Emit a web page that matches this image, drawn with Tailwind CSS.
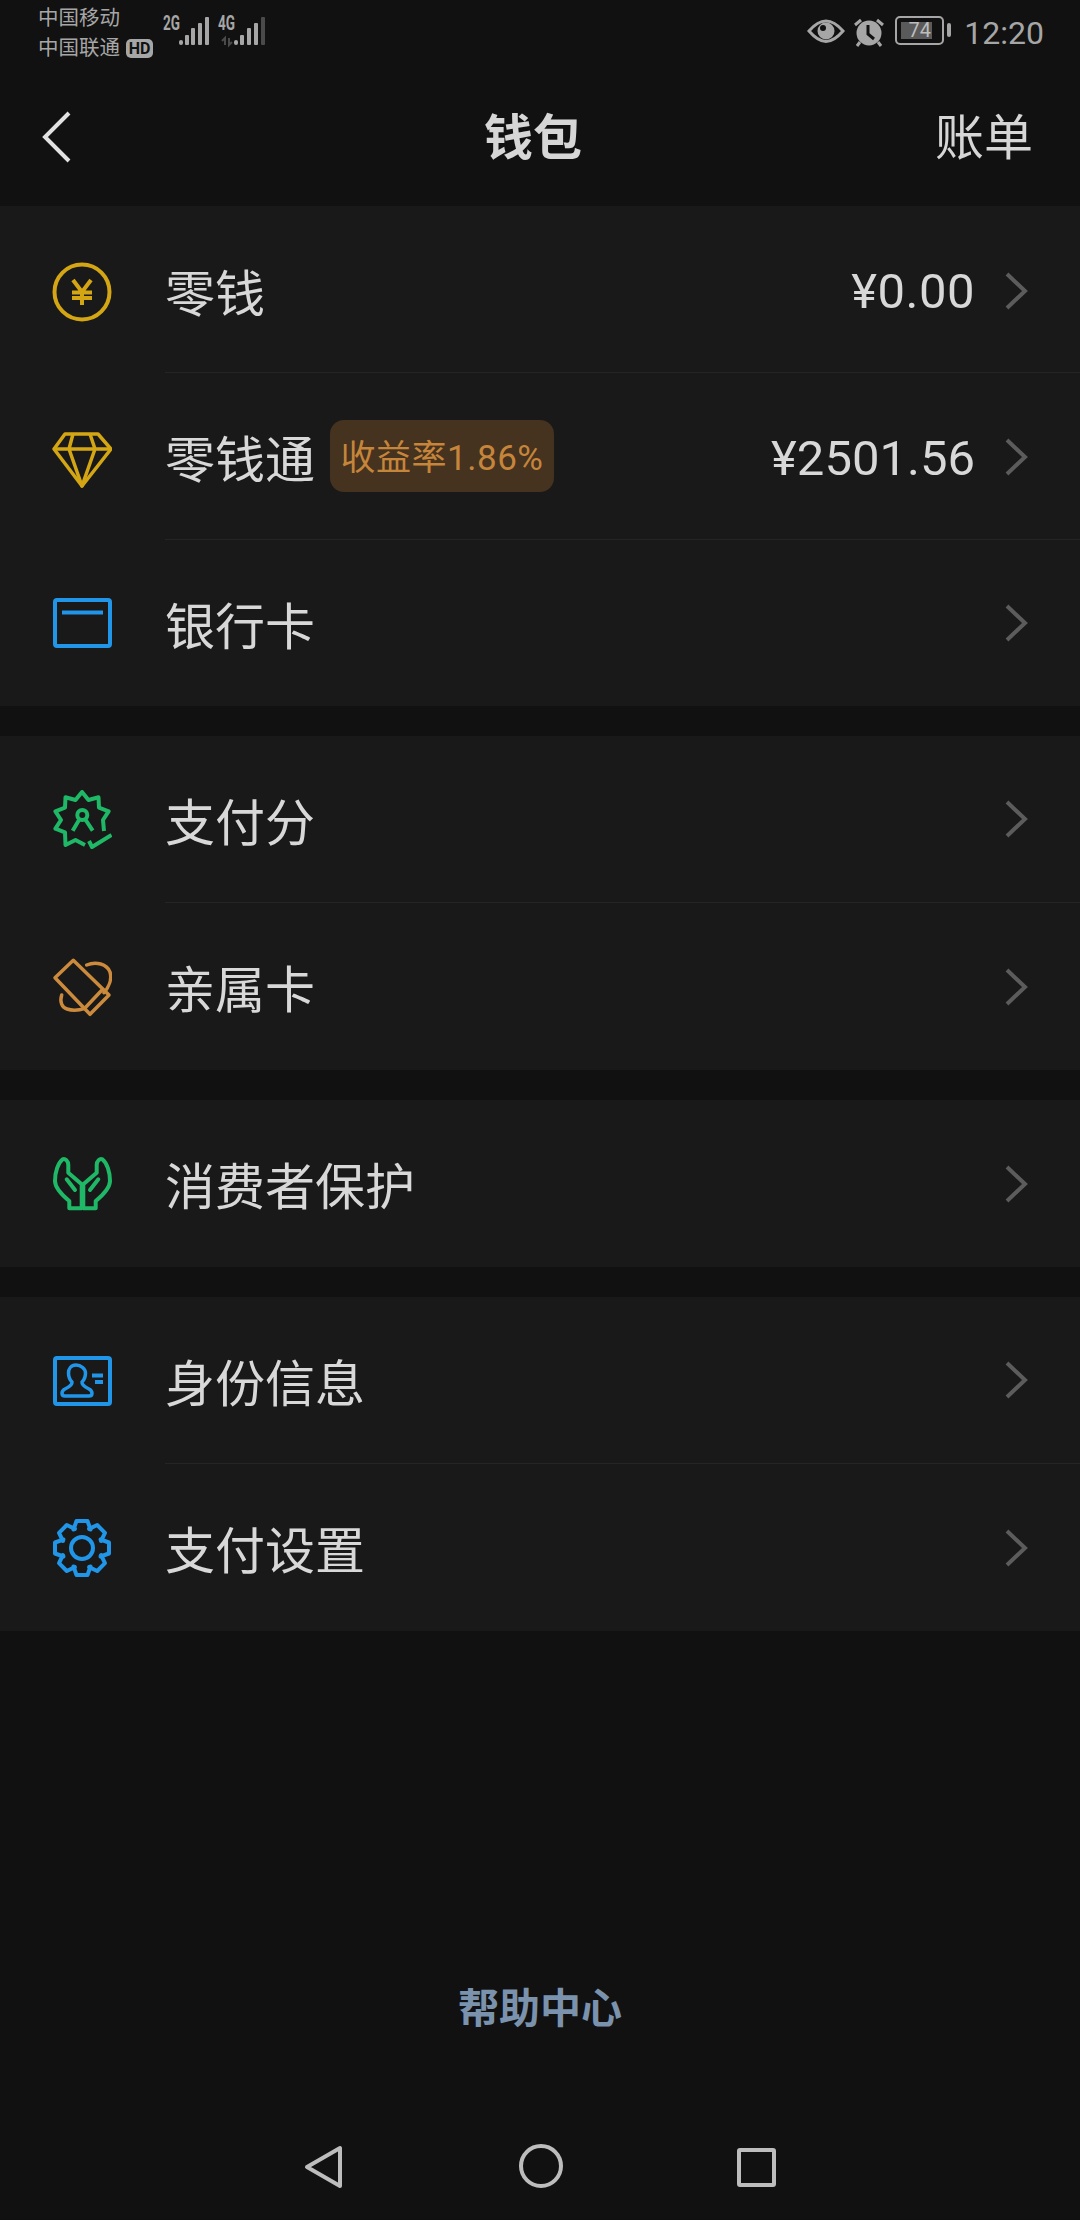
<!DOCTYPE html>
<html lang="en">
<head>
    <meta charset="UTF-8">
    <meta name="viewport" content="width=device-width, initial-scale=1.0">
    <title>钱包</title>
    <script src="https://cdn.jsdelivr.net/npm/@tailwindcss/browser@4"></script>
</head>
<body class="bg-[#111111] font-['Roboto','Noto_Sans_CJK_SC',sans-serif]">
<div class="w-[1080px] h-[2220px] flex flex-col overflow-hidden">

    <!-- Status bar -->
    <div class="h-[64px] flex justify-between text-[#a6a6a6]">
        <div class="flex pl-[38px] pt-[3px]">
            <div class="w-[122px] text-[20.500px] leading-[30px]">
                <div>中国移动</div>
                <div class="flex items-center">中国联通
                    <span class="ml-[6px] w-[27px] h-[19px] rounded-[5px] bg-[#a6a6a6] text-[#111111] text-[16px] leading-[19px] font-bold text-center">HD</span>
                </div>
            </div>
            <svg class="mt-[7px]" width="110" height="40" viewBox="0 0 110 40" fill="#a6a6a6">
                <text x="3" y="20" font-size="20" font-weight="700" textLength="17" lengthAdjust="spacingAndGlyphs">2G</text>
                <text x="58" y="20" font-size="20" font-weight="700" textLength="17" lengthAdjust="spacingAndGlyphs">4G</text>
                <rect x="19" y="30" width="4" height="5" rx="2"/>
                <rect x="25" y="25" width="4" height="10" rx="1"/>
                <rect x="31" y="18" width="4" height="17" rx="1"/>
                <rect x="38" y="13" width="4" height="22" rx="1"/>
                <rect x="45" y="7" width="4" height="28" rx="1"/>
                <rect x="74" y="30" width="4" height="5" rx="2"/>
                <rect x="80" y="25" width="4" height="10" rx="1"/>
                <rect x="87" y="18" width="4" height="17" rx="1"/>
                <rect x="94" y="13" width="4" height="22" rx="1"/>
                <rect x="101" y="7" width="4" height="28" rx="1" fill="#4a4a4a"/>
                <path d="M65 35V28L62 31M69 28V35L72 32" stroke="#4a4a4a" stroke-width="2" fill="none"/>
            </svg>
        </div>
        <div class="flex items-start pt-[16px] pr-[36px]">
            <svg width="38" height="30" viewBox="0 0 38 30" class="mt-[1px]">
                <path d="M2 14C8 7 13 4 19 4S30 7 36 14C30 21 25 24.500 19 24.500S8 21 2 14Z" fill="none" stroke="#a6a6a6" stroke-width="3"/>
                <circle cx="19" cy="14" r="8.500" fill="#a6a6a6"/>
                <circle cx="16" cy="11" r="3" fill="#111111"/>
            </svg>
            <svg width="32" height="30" viewBox="0 0 32 30" class="ml-[8px] mt-[1px]">
                <circle cx="16" cy="16" r="12.500" fill="#a6a6a6"/>
                <path d="M15 8v9l6 5" fill="none" stroke="#111111" stroke-width="3"/>
                <path d="M2 8l6-5M30 8l-6-5M7 25l-3 4M25 25l3 4" stroke="#a6a6a6" stroke-width="3" fill="none"/>
            </svg>
            <div class="ml-[10px] relative w-[49px] h-[29px] border-[2px] border-[#a6a6a6] rounded-[5px] p-[4px]">
                <div class="w-[31px] h-full bg-[#5a5a5a]"></div>
                <span class="absolute inset-0 text-center text-[20px] leading-[25px] text-[#bdbdbd]">74</span>
            </div>
            <div class="ml-[3px] mt-[7px] w-[4px] h-[14px] rounded-[2px] bg-[#a6a6a6]"></div>
            <span class="ml-[13px] text-[32px] leading-[34px]">12:20</span>
        </div>
    </div>

    <!-- Nav bar -->
    <div class="h-[142px] relative flex items-center justify-between pl-[40px] pr-[47px] pt-[8px]">
        <svg class="-translate-y-[2px]" width="32" height="52" viewBox="0 0 32 52" fill="none" stroke="#e2e2e2" stroke-width="4">
            <path d="M29 2L5 26L29 50"/>
        </svg>
        <span class="absolute left-0 right-[14px] text-center text-[49px] leading-[56px] font-semibold text-[#d6d6d6]">钱包</span>
        <span class="text-[49px] leading-[56px] text-[#d6d6d6]">账单</span>
    </div>

    <!-- Balance group -->
    <div class="bg-[#191919] flex flex-col">
        <div class="h-[167px] flex items-center pl-[52px]">
            <svg class="translate-y-[2px]" width="60" height="60" viewBox="0 0 60 60" fill="none" stroke="#d4a614" stroke-width="4">
                <circle cx="30" cy="30" r="27.500"/>
                <path d="M21 18L30 30L39 18M20 30.500H40M20 36H40M30 30V43"/>
            </svg>
            <div class="ml-[53px] flex-1 self-stretch flex items-center border-b border-[#252525] pr-[52px]">
                <span class="pt-[12px] text-[50px] text-[#d8d8d8]">零钱</span>
                <span class="pt-[6px] ml-auto text-[49px] tracking-[0.500px] text-[#d8d8d8]">¥0.00</span>
                <svg class="ml-[29px] translate-y-[2px]" width="24" height="40" viewBox="0 0 24 40" fill="none" stroke="#5c5c5c" stroke-width="4"><path d="M3 3L21 20L3 37"/></svg>
            </div>
        </div>
        <div class="h-[167px] flex items-center pl-[52px]">
            <svg class="translate-y-[3px]" width="60" height="60" viewBox="0 0 60 60" fill="none" stroke="#d4a614" stroke-width="3.500" stroke-linejoin="round">
                <path d="M13 4H46L59 19L30 56L2 19Z"/>
                <path d="M2 19H59M21 4L17 19L30 56L43 19L38 4"/>
            </svg>
            <div class="ml-[53px] flex-1 self-stretch flex items-center border-b border-[#252525] pr-[52px]">
                <span class="pt-[10px] text-[50px] text-[#d8d8d8]">零钱通</span>
                <span class="ml-[15px] pt-[6px] w-[224px] h-[72px] rounded-[14px] bg-[#45321f] flex items-center justify-center text-[35px] tracking-[0.500px] text-[#c5853a]">收益率1.86%</span>
                <span class="pt-[6px] ml-auto text-[49px] text-[#d8d8d8]">¥2501.56</span>
                <svg class="ml-[29px] translate-y-[1px]" width="24" height="40" viewBox="0 0 24 40" fill="none" stroke="#5c5c5c" stroke-width="4"><path d="M3 3L21 20L3 37"/></svg>
            </div>
        </div>
        <div class="h-[166px] flex items-center pl-[52px]">
            <svg width="60" height="60" viewBox="0 0 60 60" fill="none" stroke="#2196e8" stroke-width="4">
                <rect x="3" y="7" width="55" height="46" rx="2"/>
                <path d="M10 19.500H51"/>
            </svg>
            <div class="ml-[53px] flex-1 self-stretch flex items-center pr-[52px]">
                <span class="pt-[11px] text-[50px] text-[#d8d8d8]">银行卡</span>
                <svg class="ml-auto" width="24" height="40" viewBox="0 0 24 40" fill="none" stroke="#5c5c5c" stroke-width="4"><path d="M3 3L21 20L3 37"/></svg>
            </div>
        </div>
    </div>

    <!-- Pay score group -->
    <div class="mt-[30px] bg-[#191919] flex flex-col">
        <div class="h-[167px] flex items-center pl-[52px]">
            <svg width="60" height="60" viewBox="0 0 60 60" fill="none" stroke="#1fb866" stroke-width="4" stroke-linejoin="round">
                <path d="M52 41L51 30L56.600 21.300L47 17.700L46.500 7.300L36.500 10L30 2L23.500 10L13.500 7.300L13 17.700L3.400 21.300L9 30L3.400 38.700L13 42.300L13.500 55L23.500 50L33 55"/>
                <circle cx="30.300" cy="25" r="5"/>
                <path d="M27 30L20.700 40.700M33.700 30L40.700 40.700"/>
                <path d="M37 51L40 57L59.500 45" stroke-width="4"/>
            </svg>
            <div class="ml-[53px] flex-1 self-stretch flex items-center border-b border-[#252525] pr-[52px]">
                <span class="pt-[11px] text-[50px] text-[#d8d8d8]">支付分</span>
                <svg class="ml-auto" width="24" height="40" viewBox="0 0 24 40" fill="none" stroke="#5c5c5c" stroke-width="4"><path d="M3 3L21 20L3 37"/></svg>
            </div>
        </div>
        <div class="h-[167px] flex items-center pl-[52px]">
            <svg width="60" height="60" viewBox="0 0 60 60" fill="none" stroke="#cb8a3c" stroke-width="3.500" stroke-linejoin="round" stroke-linecap="round">
                <path d="M21.300 3.300L3 20.700L38 57.300L57 38Z"/>
                <path d="M50.700 32.300L33 51"/>
                <path d="M34.700 8C44 4 55 7 58 15C60 22 57 30 52 35.700"/>
                <path d="M9.700 38C7.500 45 10 50.500 15 52C21 54 28 53 33 51.300"/>
            </svg>
            <div class="ml-[53px] flex-1 self-stretch flex items-center pr-[52px]">
                <span class="pt-[9px] text-[50px] text-[#d8d8d8]">亲属卡</span>
                <svg class="ml-auto" width="24" height="40" viewBox="0 0 24 40" fill="none" stroke="#5c5c5c" stroke-width="4"><path d="M3 3L21 20L3 37"/></svg>
            </div>
        </div>
    </div>

    <!-- Consumer protection group -->
    <div class="mt-[30px] bg-[#191919] flex flex-col">
        <div class="h-[167px] flex items-center pl-[52px]">
            <svg width="60" height="60" viewBox="0 0 60 60" fill="none" stroke="#1fb866" stroke-width="4" stroke-linejoin="round" stroke-linecap="round">
                <path d="M10.700 5.300C6 9 3 18 3 27C3 34 10 41 17.300 47V54.300H29.700V30.300L16.300 18.700V11C16.300 7 13 4 10.700 5.300Z"/>
                <path d="M14.700 25.300L23 36"/>
                <path d="M50.300 5.300C55 9 58 18 58 27C58 34 51 41 43.700 47V54.300H31.300V30.300L44.700 18.700V11C44.700 7 48 4 50.300 5.300Z"/>
                <path d="M46.300 25.300L38 36"/>
            </svg>
            <div class="ml-[53px] flex-1 self-stretch flex items-center pr-[52px]">
                <span class="pt-[10px] text-[50px] text-[#d8d8d8]">消费者保护</span>
                <svg class="ml-auto" width="24" height="40" viewBox="0 0 24 40" fill="none" stroke="#5c5c5c" stroke-width="4"><path d="M3 3L21 20L3 37"/></svg>
            </div>
        </div>
    </div>

    <!-- Identity and settings group -->
    <div class="mt-[30px] bg-[#191919] flex flex-col">
        <div class="h-[167px] flex items-center pl-[52px]">
            <svg width="60" height="60" viewBox="0 0 60 60" fill="none" stroke="#2196e8" stroke-width="4" stroke-linejoin="round">
                <rect x="3" y="7" width="55" height="46" rx="2"/>
                <path d="M24 14C19 14 16.500 18 16.500 22C16.500 26 18 29 20 31C20.500 34 17 36 13 38C9 40 9 45 13 45H37C41 45 41 40 37 38C33 36 29.500 34 30 31C32 29 33.500 26 33.500 22C33.500 18 29 14 24 14Z" stroke-width="3.500"/>
                <path d="M40 24.500H51M43 31H51"/>
            </svg>
            <div class="ml-[53px] flex-1 self-stretch flex items-center border-b border-[#252525] pr-[52px]">
                <span class="pt-[11px] text-[50px] text-[#d8d8d8]">身份信息</span>
                <svg class="ml-auto" width="24" height="40" viewBox="0 0 24 40" fill="none" stroke="#5c5c5c" stroke-width="4"><path d="M3 3L21 20L3 37"/></svg>
            </div>
        </div>
        <div class="h-[167px] flex items-center pl-[52px]">
            <svg width="60" height="60" viewBox="0 0 60 60" fill="none" stroke="#2196e8" stroke-width="4" stroke-linejoin="round" stroke-linecap="round">
                <circle cx="30" cy="30" r="11"/>
                <g transform="translate(30 30)">
                    <path id="tooth" d="M-8.500 -18.500L-5.500 -27L5.500 -27L8.500 -18.500"/>
                    <use href="#tooth" transform="rotate(45)"/>
                    <use href="#tooth" transform="rotate(90)"/>
                    <use href="#tooth" transform="rotate(135)"/>
                    <use href="#tooth" transform="rotate(180)"/>
                    <use href="#tooth" transform="rotate(225)"/>
                    <use href="#tooth" transform="rotate(270)"/>
                    <use href="#tooth" transform="rotate(315)"/>
                </g>
            </svg>
            <div class="ml-[53px] flex-1 self-stretch flex items-center pr-[52px]">
                <span class="pt-[9px] text-[50px] text-[#d8d8d8]">支付设置</span>
                <svg class="ml-auto" width="24" height="40" viewBox="0 0 24 40" fill="none" stroke="#5c5c5c" stroke-width="4"><path d="M3 3L21 20L3 37"/></svg>
            </div>
        </div>
    </div>

    <!-- Help link -->
    <div class="mt-[346px] pt-[6px] h-[60px] flex items-center justify-center text-[41px] font-semibold text-[#7b92ad]">帮助中心</div>

    <!-- Android nav -->
    <div class="mt-[99px] h-[60px] flex justify-center">
        <svg class="-translate-x-[1px]" width="60" height="60" viewBox="0 0 60 60" fill="none" stroke="#bdbdbd" stroke-width="4" stroke-linejoin="round">
            <path d="M14 31L47 12V50Z"/>
        </svg>
        <svg class="ml-[157px]" width="60" height="60" viewBox="0 0 60 60" fill="none" stroke="#bdbdbd" stroke-width="4">
            <circle cx="30" cy="30" r="20"/>
        </svg>
        <svg class="ml-[155px]" width="60" height="60" viewBox="0 0 60 60" fill="none" stroke="#bdbdbd" stroke-width="4" stroke-linejoin="round">
            <rect x="13" y="14" width="35" height="35" rx="1"/>
        </svg>
    </div>
</div>
</body>
</html>
